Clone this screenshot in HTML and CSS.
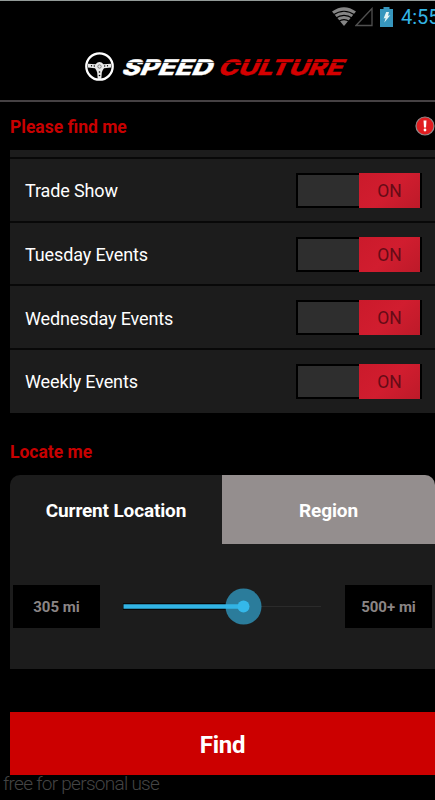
FILE: index.html
```
<!DOCTYPE html>
<html lang="en">
<head>
  <meta charset="UTF-8" />
  <title>Speed Culture</title>
  <link rel="stylesheet" href="styles.css">
</head>
<body>
  <div class="status-bar">
    <svg class="wifi" width="26" height="19" viewBox="0 0 26 19">
      <path d="M1 4.500Q13-4 25 4.500L13 19Z" fill="#858585" />
      <path d="M2 8Q13 0.500 24 8M4.500 11.300Q13 5.500 21.500 11.300M7.500 14.500Q13 10.800 18.500 14.500" fill="none" stroke="#000" stroke-width="1.100" />
    </svg>
    <svg class="signal" width="18" height="20" viewBox="0 0 18 20">
      <path d="M17 1.500V18.500H1Z" fill="none" stroke="#505050" stroke-width="1.300" />
    </svg>
    <svg class="battery" width="13" height="20" viewBox="0 0 13 20">
      <path d="M3.500 0H9.500V2H13V20H0V2H3.500Z" fill="#3796bd" />
      <path d="M6.200 5H9L8 8.800L10.300 8.200L4.300 15.500L5.600 11L3.600 11.500Z" fill="#e4f3f4" />
    </svg>
    <span class="clock">4:55</span>
  </div>

  <header>
    <svg class="logo" width="265" height="32" viewBox="84 51 265 32">
      <circle cx="99.500" cy="66.500" r="13.200" fill="none" stroke="#fff" stroke-width="2.300" />
      <path d="M88 63.700L95.500 64.200Q99.500 60 103.500 64.200L111 63.700V67.500L104 68.200Q102.500 70 101.800 72.500L101.300 79H97.700L97.200 72.500Q96.500 70 95 68.200L88 67.500Z" fill="#e8e8e8" />
      <g fill="#000">
        <circle cx="91.500" cy="65.700" r=".7" /><circle cx="94.300" cy="66" r=".7" />
        <circle cx="104.700" cy="66" r=".7" /><circle cx="107.500" cy="65.700" r=".7" />
        <circle cx="99.500" cy="72" r=".8" /><circle cx="99.500" cy="75.500" r=".8" />
      </g>
      <circle cx="99.500" cy="66.500" r="1.700" fill="none" stroke="#444" stroke-width=".6" />
      <g class="logo-text">
        <text x="0" y="0" transform="translate(120.500 74.700) skewX(-24)" textLength="90" lengthAdjust="spacingAndGlyphs" fill="#fff" stroke="#fff">SPEED</text>
        <text x="0" y="0" transform="translate(217 74.700) skewX(-24)" textLength="124" lengthAdjust="spacingAndGlyphs" fill="#d40000" stroke="#d40000">CULTURE</text>
      </g>
      <path d="M127 62.500H215" stroke="#000" stroke-width=".6" />
      <path d="M222 62.500H344" stroke="#000" stroke-width=".6" />
    </svg>
  </header>

  <main>
    <div class="section-title">
      <h3>Please find me</h3>
      <svg width="20" height="20" viewBox="0 0 20 20">
        <circle cx="10" cy="10" r="9" fill="#e01d20" stroke="#938b8b" stroke-width="1.200" />
        <path d="M8.500 4.500H11.500L11 11.500H9Z" fill="#fff" />
        <circle cx="10" cy="14" r="1.400" fill="#fff" />
      </svg>
    </div>

    <div class="event-list">
      <div class="event-row"><span>Trade Show</span><div class="toggle"><b>ON</b></div></div>
      <div class="event-row"><span>Tuesday Events</span><div class="toggle"><b>ON</b></div></div>
      <div class="event-row"><span>Wednesday Events</span><div class="toggle"><b>ON</b></div></div>
      <div class="event-row"><span>Weekly Events</span><div class="toggle"><b>ON</b></div></div>
    </div>

    <h3 class="locate-title">Locate me</h3>

    <div class="locate">
      <div class="tabs">
        <div class="tab">Current Location</div>
        <div class="tab region">Region</div>
      </div>
      <div class="range">
        <div class="miles">305 mi</div>
        <svg class="slider" width="200" height="38" viewBox="0 0 200 38">
          <path d="M121 18.500H198" stroke="#2b2b2b" />
          <path d="M0 18.500H121" stroke="#000" stroke-width="6.500" />
          <circle cx="120.500" cy="18.500" r="18" fill="#2b7c9b" />
          <path d="M.5 18.500H121" stroke="#32b4e5" stroke-width="4.600" />
          <circle cx="120.500" cy="18.500" r="6" fill="#34b8ea" />
        </svg>
        <div class="miles">500+ mi</div>
      </div>
    </div>

    <button class="find">Find</button>
  </main>
  <div class="watermark">free for personal use</div>
</body>
</html>
```

FILE: styles.css
```
html, body {
  height: 100%;
  margin: 0;
  overflow: hidden;
  background: #000;
  color: #fff;
  font-family: Roboto, sans-serif;
}

* {
  box-sizing: border-box;
}

.status-bar {
  display: flex;
  align-items: flex-start;
  height: 34px;
  padding: 6px 0 0 331px;
  border-top: 1px solid #929a98;
}

.status-bar svg {
  flex: none;
}

.signal {
  margin-left: -2px;
}

.battery {
  margin-left: 7px;
}

.clock {
  margin-left: 8px;
  font-size: 20px;
  line-height: 20px;
  color: #33b5e5;
}

header {
  height: 68px;
  padding: 17px 0 0 84px;
  border-bottom: 2px solid #454143;
}

.logo {
  display: block;
}

.logo-text {
  font-family: Inter, sans-serif;
  font-size: 21.5px;
  font-weight: 800;
  stroke-width: .4px;
}

main {
  padding-left: 10px;
}

h3 {
  margin: 0;
  font-size: 17.5px;
  line-height: 22px;
  font-weight: 700;
  color: #c80000;
}

.section-title {
  display: flex;
  justify-content: space-between;
  height: 48px;
  padding-top: 14px;
}

.event-list {
  height: 263px;
  padding-top: 7px;
  background: #1c1c1c;
}

.event-row {
  display: flex;
  justify-content: space-between;
  align-items: center;
  height: 63.7px;
  padding: 1px 13px 0 15px;
  border-top: 2px solid #080808;
  font-size: 18px;
  letter-spacing: -.13px;
}

.event-row span {
  padding-top: 1px;
}

.toggle {
  width: 126px;
  height: 35px;
  padding: 0 2px 0 61px;
  background: linear-gradient(#2e2e2e, #2e2e2e) 2px 2px / 61px 31px no-repeat #000;
}

.toggle b {
  display: block;
  height: 35px;
  margin-left: 2px;
  font-size: 17.5px;
  line-height: 37px;
  font-weight: 400;
  text-align: center;
  color: #660b16;
  background: linear-gradient(135deg, #cb1a2b, #d11d2f 50%, #bd1a29);
}

.locate-title {
  margin-top: 28px;
}

.locate {
  height: 194px;
  margin-top: 12px;
  border-radius: 10px 10px 0 0;
  background: #1c1c1c;
  overflow: hidden;
}

.tabs {
  display: flex;
  height: 69px;
}

.tab {
  width: 212px;
  font-size: 19px;
  line-height: 71px;
  font-weight: 700;
  letter-spacing: -.15px;
  text-align: center;
}

.region {
  width: 213px;
  background: #948e8e;
}

.range {
  display: flex;
  justify-content: space-between;
  align-items: center;
  padding: 41px 3px 0;
}

.miles {
  width: 87px;
  height: 43px;
  font-size: 15px;
  line-height: 44px;
  font-weight: 700;
  text-align: center;
  color: #8b8585;
  background: #000;
}

.find {
  display: block;
  width: 425px;
  height: 63px;
  margin-top: 43px;
  padding: 3px 0 0;
  border: none;
  background: #c00;
  color: #fff;
  font-family: inherit;
  font-size: 24px;
  font-weight: 700;
  letter-spacing: -.3px;
}

.watermark {
  padding-left: 3px;
  font-size: 19px;
  line-height: 17px;
  font-weight: 300;
  letter-spacing: -.72px;
  color: #444;
}
```
